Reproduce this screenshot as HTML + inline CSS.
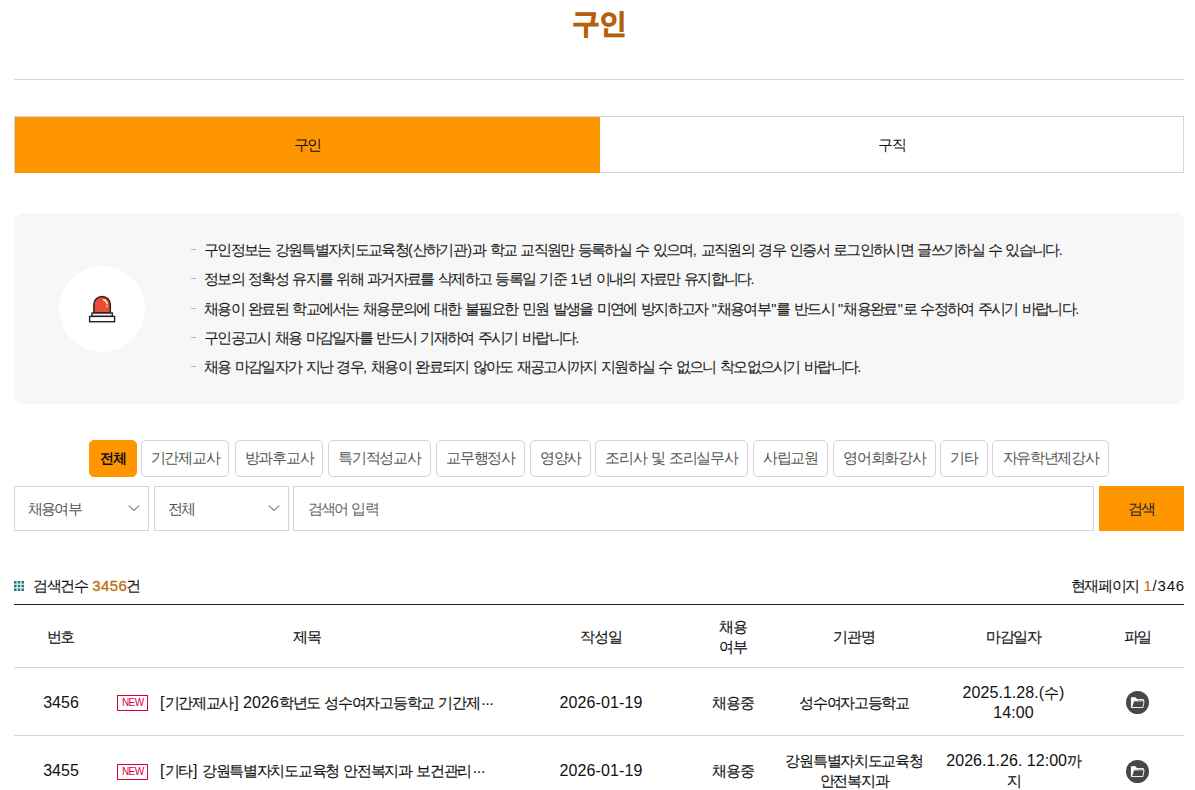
<!DOCTYPE html>
<html lang="ko">
<head>
<meta charset="utf-8">
<style>
*{box-sizing:border-box;margin:0;padding:0}
html,body{background:#fff;width:1195px;height:790px;overflow:hidden}
body{font-family:"Liberation Sans",sans-serif;color:#222;position:relative}
.title{position:absolute;left:0;width:1197px;top:6px;text-align:center;font-size:28px;font-weight:bold;color:#b65f0c;line-height:36px;letter-spacing:-1.5px;-webkit-text-stroke:1px #b65f0c}
.hr{position:absolute;left:14px;width:1170px;top:79px;height:1px;background:#d7d7dd}
.tabs{position:absolute;left:14px;top:116px;width:1170px;height:57px;border:1px solid #d4d4dc}
.tab-on{position:absolute;left:0;top:0;width:585px;height:56px;background:#ff9600;text-align:center;line-height:55px;font-size:15px;color:#111;letter-spacing:-1.3px}
.tab-off{position:absolute;left:585px;top:0;width:584px;height:55px;text-align:center;line-height:55px;font-size:15px;color:#111;letter-spacing:-1.3px}
.info{position:absolute;left:14px;top:213px;width:1170px;height:191px;background:#f7f7f7;border-radius:9px}
.circle{position:absolute;left:45px;top:53px;width:86px;height:86px;border-radius:50%;background:#fff}
.siren{position:absolute;left:70px;top:77px;width:36px;height:36px}
.lines{position:absolute;left:177px;top:23px}
.line{position:relative;height:29.25px;line-height:29px;font-size:14.5px;color:#1a1a1a;white-space:nowrap;padding-left:13px;letter-spacing:-1.68px;word-spacing:1.8px;-webkit-text-stroke:0.1px #222}
.line:before{content:"";position:absolute;left:0px;top:13px;width:5px;height:1px;background:#b5b5b5}
.cat{position:absolute;top:440px;height:37px;border:1px solid #d3d3dc;border-radius:5px;background:#fff;font-size:15px;color:#555;line-height:33.5px;text-align:center;white-space:nowrap;letter-spacing:-1.3px;word-spacing:1.5px}
.cat.on{background:#ff9600;border-color:#ff9600;color:#111;font-weight:bold;font-size:14px;letter-spacing:-0.9px;text-indent:0px;line-height:35px}
.sel{position:absolute;top:486px;height:45px;border:1px solid #d3d3dc;background:#fff;font-size:14.5px;color:#555;line-height:44px;letter-spacing:-1.8px;white-space:nowrap}
.sel svg{position:absolute;top:17.5px;width:12px;height:6px;overflow:visible}
.inp{position:absolute;left:293px;top:486px;width:801px;height:45px;border:1px solid #d3d3dc;font-size:14.5px;color:#666;line-height:44px;padding-left:14px;letter-spacing:-1.8px;word-spacing:1.5px}
.btn{position:absolute;left:1099px;top:486px;width:85px;height:45px;background:#ff9600;text-align:center;line-height:45px;font-size:15px;color:#222;letter-spacing:-1.3px}
.cnt{position:absolute;left:14px;top:576px;font-size:15px;line-height:20px;color:#111;-webkit-text-stroke:0.1px #111;letter-spacing:-1.3px;word-spacing:1.5px;white-space:nowrap}
.cnt .ic{display:inline-block;width:10px;height:10px;margin-right:9px;vertical-align:0px}
.org{color:#c06a10;-webkit-text-stroke-color:#c06a10}
.page{position:absolute;right:10px;top:576px;font-size:15px;line-height:20px;color:#111;-webkit-text-stroke:0.1px #111;letter-spacing:-1.3px;word-spacing:1.5px;white-space:nowrap}
.tline{position:absolute;left:14px;width:1170px;height:1px}
.th,.td{position:absolute;text-align:center;font-size:15px;line-height:20px;color:#111;-webkit-text-stroke:0.15px #111;white-space:nowrap;letter-spacing:-1.3px;word-spacing:1.5px}
.badge{position:absolute;left:117px;width:31px;height:16px;border:1px solid #d6003a;color:#d6003a;font-size:10px;line-height:14px;text-align:center;letter-spacing:-0.6px;text-indent:0.5px}
.ttl{position:absolute;left:160px;font-size:15px;line-height:20px;color:#111;-webkit-text-stroke:0.15px #111;white-space:nowrap;letter-spacing:-1.3px;word-spacing:1.5px}
.file{position:absolute;left:1126px;width:23px;height:23px}
</style>
</head>
<body>
<div class="title">구인</div>
<div class="hr"></div>
<div class="tabs"><div class="tab-on">구인</div><div class="tab-off">구직</div></div>
<div class="info">
  <div class="circle"></div>
  <svg class="siren" viewBox="0 0 36 36">
    <path d="M9.9,23 V14.6 A8.2,8.2 0 0 1 26.3,14.6 V23 Z" fill="#e84b36" stroke="#222" stroke-width="1.5"/>
    <path d="M19.5,9.6 A5.5,5.5 0 0 1 23.2,14" fill="none" stroke="#fff" stroke-width="1.2" stroke-linecap="round"/>
    <rect x="22.2" y="15.8" width="1.3" height="1.3" fill="#fff"/>
    <rect x="8" y="23" width="20.3" height="3.4" fill="#f4f4f4" stroke="#222" stroke-width="1.4"/>
    <rect x="5.6" y="26.4" width="25" height="5.3" fill="#fff" stroke="#222" stroke-width="1.4"/>
  </svg>
  <div class="lines">
    <div class="line">구인정보는 강원특별자치도교육청<span style="letter-spacing:0.00px;-webkit-text-stroke-width:0;">(</span>산하기관<span style="letter-spacing:0.00px;-webkit-text-stroke-width:0; padding-left:1.2px;">)</span>과 학교 교직원만 등록하실 수 있으며<span style="letter-spacing:0.00px;-webkit-text-stroke-width:0;">,</span> 교직원의 경우 인증서 로그인하시면 글쓰기하실 수 있습니다<span style="letter-spacing:0.00px;-webkit-text-stroke-width:0;">.</span></div>
    <div class="line">정보의 정확성 유지를 위해 과거자료를 삭제하고 등록일 기준 <span style="letter-spacing:0.00px;-webkit-text-stroke-width:0;">1</span>년 이내의 자료만 유지합니다<span style="letter-spacing:0.00px;-webkit-text-stroke-width:0;">.</span></div>
    <div class="line">채용이 완료된 학교에서는 채용문의에 대한 불필요한 민원 발생을 미연에 방지하고자 <span style="letter-spacing:0.00px;-webkit-text-stroke-width:0;">"</span>채용여부<span style="letter-spacing:0.00px;-webkit-text-stroke-width:0; padding-left:1.2px;">"</span>를 반드시 <span style="letter-spacing:0.00px;-webkit-text-stroke-width:0;">"</span>채용완료<span style="letter-spacing:0.00px;-webkit-text-stroke-width:0; padding-left:1.2px;">"</span>로 수정하여 주시기 바랍니다<span style="letter-spacing:0.00px;-webkit-text-stroke-width:0;">.</span></div>
    <div class="line">구인공고시 채용 마감일자를 반드시 기재하여 주시기 바랍니다<span style="letter-spacing:0.00px;-webkit-text-stroke-width:0;">.</span></div>
    <div class="line">채용 마감일자가 지난 경우<span style="letter-spacing:0.00px;-webkit-text-stroke-width:0;">,</span> 채용이 완료되지 않아도 재공고시까지 지원하실 수 없으니 착오없으시기 바랍니다<span style="letter-spacing:0.00px;-webkit-text-stroke-width:0;">.</span></div>
  </div>
</div>
<div class="cat on" style="left:89px;width:48px">전체</div>
<div class="cat" style="left:141px;width:88px">기간제교사</div>
<div class="cat" style="left:235px;width:88px">방과후교사</div>
<div class="cat" style="left:328px;width:103px">특기적성교사</div>
<div class="cat" style="left:436px;width:89px">교무행정사</div>
<div class="cat" style="left:530px;width:61px">영양사</div>
<div class="cat" style="left:595px;width:153px">조리사 및 조리실무사</div>
<div class="cat" style="left:753px;width:75px">사립교원</div>
<div class="cat" style="left:833px;width:103px">영어회화강사</div>
<div class="cat" style="left:940px;width:48px">기타</div>
<div class="cat" style="left:992px;width:117px">자유학년제강사</div>
<div class="sel" style="left:14px;width:135px;padding-left:13px">채용여부<svg style="left:113px" viewBox="0 0 12 6"><path d="M0.6,0.6 L6,5.2 L11.4,0.6" fill="none" stroke="#888" stroke-width="1.2"/></svg></div>
<div class="sel" style="left:154px;width:135px;padding-left:13px">전체<svg style="left:113px" viewBox="0 0 12 6"><path d="M0.6,0.6 L6,5.2 L11.4,0.6" fill="none" stroke="#888" stroke-width="1.2"/></svg></div>
<div class="inp">검색어 입력</div>
<div class="btn">검색</div>
<div class="cnt"><svg class="ic" viewBox="0 0 10 10" fill="#1c7b80"><rect x="0.0" y="0.0" width="2.6" height="2.6"/><rect x="3.7" y="0.0" width="2.6" height="2.6"/><rect x="7.4" y="0.0" width="2.6" height="2.6"/><rect x="0.0" y="3.7" width="2.6" height="2.6"/><rect x="3.7" y="3.7" width="2.6" height="2.6"/><rect x="7.4" y="3.7" width="2.6" height="2.6"/><rect x="0.0" y="7.4" width="2.6" height="2.6"/><rect x="3.7" y="7.4" width="2.6" height="2.6"/><rect x="7.4" y="7.4" width="2.6" height="2.6"/></svg>검색건수 <span class="org" style="letter-spacing:0.4px;margin-right:-1px;-webkit-text-stroke:0.3px #c06a10">3456</span>건</div>
<div class="page">현재페이지 <span class="org" style="letter-spacing:0.8px;-webkit-text-stroke-width:0">1</span><span style="letter-spacing:0.8px;-webkit-text-stroke-width:0">/346</span></div>
<div class="tline" style="top:604px;background:#222"></div>
<div class="tline" style="top:667px;background:#d7d7de"></div>
<div class="tline" style="top:735px;background:#d7d7de"></div>
<div class="th" style="left:-49.5px;top:626.5px;width:220px">번호</div>
<div class="th" style="left:197.0px;top:626.5px;width:220px">제목</div>
<div class="th" style="left:491.0px;top:626.5px;width:220px">작성일</div>
<div class="th" style="left:623.0px;top:616.5px;width:220px">채용<br>여부</div>
<div class="th" style="left:744.0px;top:626.5px;width:220px">기관명</div>
<div class="th" style="left:903.5px;top:626.5px;width:220px">마감일자</div>
<div class="th" style="left:1027.5px;top:626.5px;width:220px">파일</div>
<div class="td" style="left:-49.0px;top:692.5px;width:220px"><span style="letter-spacing:0.00px;-webkit-text-stroke-width:0;font-size:16.0px;">3456</span></div>
<div class="badge" style="top:695.0px">NEW</div>
<div class="ttl" style="top:692.5px"><span style="letter-spacing:0.05px;-webkit-text-stroke-width:0;font-size:16.0px;">[</span>기간제교사<span style="letter-spacing:0.05px;-webkit-text-stroke-width:0; padding-left:1.2px;font-size:16.0px;">]</span> <span style="letter-spacing:0.05px;-webkit-text-stroke-width:0;font-size:16.0px;">2026</span>학년도 성수여자고등학교 기간제<span style="letter-spacing:-0.9px;margin-left:1.5px">&#183;&#183;&#183;</span></div>
<div class="td" style="left:491.0px;top:692.5px;width:220px"><span style="letter-spacing:0.10px;-webkit-text-stroke-width:0;font-size:16.0px;">2026-01-19</span></div>
<div class="td" style="left:623.0px;top:692.5px;width:220px">채용중</div>
<div class="td" style="left:744.0px;top:692.5px;width:220px">성수여자고등학교</div>
<div class="td" style="left:903.5px;top:682.5px;width:220px"><span style="letter-spacing:0.05px;-webkit-text-stroke-width:0;font-size:16.0px;">2025.1.28.(</span>수<span style="letter-spacing:0.05px;-webkit-text-stroke-width:0; padding-left:1.2px;font-size:16.0px;">)</span><br><span style="letter-spacing:0.05px;-webkit-text-stroke-width:0;font-size:16.0px;">14:00</span></div>
<svg class="file" style="top:691.0px" viewBox="0 0 23 23"><circle cx="11.5" cy="11.5" r="11.5" fill="#474747"/><path d="M5.4,16.6 V6.7 H9.4 L10.8,8.6 H17.4 V10" fill="none" stroke="#fff" stroke-width="1"/><path d="M5.4,16.6 V6.7 H9.4 L10.8,8.6 H12 V9.7 H7.6 L6.4,16.6 Z" fill="#fff"/><path d="M7.7,9.9 H18.1 L16.9,16.5 H5.6 Z" fill="#474747" stroke="#fff" stroke-width="0.9" stroke-linejoin="round"/></svg>
<div class="td" style="left:-49.0px;top:761.0px;width:220px"><span style="letter-spacing:0.00px;-webkit-text-stroke-width:0;font-size:16.0px;">3455</span></div>
<div class="badge" style="top:763.5px">NEW</div>
<div class="ttl" style="top:761.0px"><span style="letter-spacing:0.05px;-webkit-text-stroke-width:0;font-size:16.0px;">[</span>기타<span style="letter-spacing:0.05px;-webkit-text-stroke-width:0; padding-left:1.2px;font-size:16.0px;">]</span> 강원특별자치도교육청 안전복지과 보건관리<span style="letter-spacing:-0.9px;margin-left:1.5px">&#183;&#183;&#183;</span></div>
<div class="td" style="left:491.0px;top:761.0px;width:220px"><span style="letter-spacing:0.10px;-webkit-text-stroke-width:0;font-size:16.0px;">2026-01-19</span></div>
<div class="td" style="left:623.0px;top:761.0px;width:220px">채용중</div>
<div class="td" style="left:744.0px;top:751.0px;width:220px">강원특별자치도교육청<br>안전복지과</div>
<div class="td" style="left:903.5px;top:751.0px;width:220px"><span style="letter-spacing:0.05px;-webkit-text-stroke-width:0;font-size:16.0px;">2026.1.26.</span> <span style="letter-spacing:0.05px;-webkit-text-stroke-width:0;font-size:16.0px;">12:00</span>까<br>지</div>
<svg class="file" style="top:759.5px" viewBox="0 0 23 23"><circle cx="11.5" cy="11.5" r="11.5" fill="#474747"/><path d="M5.4,16.6 V6.7 H9.4 L10.8,8.6 H17.4 V10" fill="none" stroke="#fff" stroke-width="1"/><path d="M5.4,16.6 V6.7 H9.4 L10.8,8.6 H12 V9.7 H7.6 L6.4,16.6 Z" fill="#fff"/><path d="M7.7,9.9 H18.1 L16.9,16.5 H5.6 Z" fill="#474747" stroke="#fff" stroke-width="0.9" stroke-linejoin="round"/></svg>
</body>
</html>
